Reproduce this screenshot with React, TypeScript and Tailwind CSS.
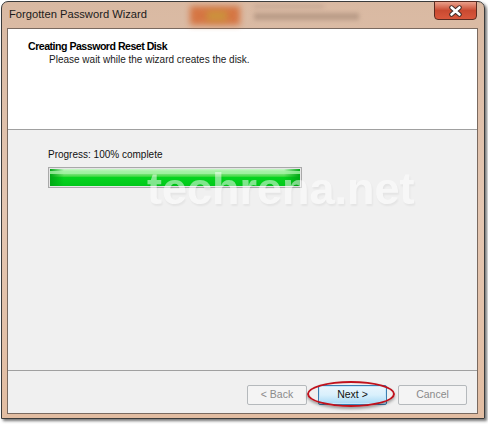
const font = { fontFamily: '"Liberation Sans", Arial, sans-serif' };

const CloseGlyph = () => (
  <svg width="15" height="12" viewBox="0 0 15 12">
    <path d="M3.5 2.5 L11.5 9.5 M11.5 2.5 L3.5 9.5" stroke="#3b2a26" strokeWidth="4.4" strokeLinecap="round" />
    <path d="M3.5 2.5 L11.5 9.5 M11.5 2.5 L3.5 9.5" stroke="#ffffff" strokeWidth="2.6" strokeLinecap="round" />
  </svg>
);

const WizButton = ({ label, primary, w }: { label: string; primary?: boolean; w: string }) => (
  <div
    className={
      w +
      " h-[20px] flex items-center justify-center rounded-[2px] border text-[10.5px] " +
      (primary
        ? "border-[#3c7fb1] bg-gradient-to-b from-[#eaf6fd] via-[#d9f0fc] to-[#a7d9f5] text-[#111] shadow-[inset_0_0_0_1px_#c6e8fb]"
        : "border-[#b5b9bc] bg-[#f4f4f4] text-[#8a8a8a]")
    }
  >
    {label}
  </div>
);

export default function App() {
  return (
    <div className="w-[488px] h-[426px] bg-white overflow-hidden" style={font}>
      <div className="ml-[1px] mt-[1px] w-[484px] h-[418px] rounded-t-[7px] border border-[#3b3b3b] bg-gradient-to-b from-[#d9b9a2] via-[#e4c6b1] to-[#e2bda2] shadow-[2px_2px_3px_rgba(0,0,0,0.55)] flex flex-col">
        {/* title bar */}
        <div className="relative h-[26px] flex items-start shrink-0">
          <div className="pl-[7px] pt-[7px] text-[11.2px] text-[#1b1b1b] leading-none">Forgotten Password Wizard</div>
          <div className="absolute left-[188px] top-[4px] w-[50px] h-[19px] bg-[#d4652c] blur-[3px] opacity-80" />
          <div className="absolute left-[205px] top-[9px] w-[20px] h-[10px] bg-[#c8a03a] blur-[3px] opacity-70" />
          <div className="absolute left-[252px] top-[3px] w-[70px] h-[3px] bg-[#b89a88] blur-[2px] opacity-60" />
          <div className="absolute left-[252px] top-[11px] w-[105px] h-[7px] bg-[#a58976] blur-[2px] opacity-60" />
          <div className="absolute right-[7px] top-[-1px] w-[43px] h-[19px] rounded-b-[4px] border border-[#5b2c22] bg-gradient-to-b from-[#e9a08b] via-[#c94a31] to-[#d9573c] flex items-center justify-center">
            <CloseGlyph />
          </div>
        </div>
        {/* client */}
        <div className="ml-[5px] w-[471px] h-[386px] border border-[#7a6a60] bg-[#f0f0f0] flex flex-col">
          <div className="h-[101px] bg-white border-b border-[#a0a0a0] shrink-0">
            <div className="pl-[20px] pt-[10px] text-[10.6px] font-bold tracking-[-0.5px] text-black leading-[14px]">Creating Password Reset Disk</div>
            <div className="pl-[41px] text-[10px] text-[#1a1a1a] leading-[13px]">Please wait while the wizard creates the disk.</div>
          </div>
          <div className="relative flex-1 border-b border-[#a0a0a0]">
            <div className="pl-[40px] pt-[18px] text-[10px] text-[#111] leading-[13px]">Progress: 100% complete</div>
            <div className="ml-[40px] mt-[6px] w-[254px] h-[21px] border border-[#a9a9a9] bg-[#e6e6e6] p-[1px]">
              <div className="relative w-full h-full bg-gradient-to-b from-[#c8f8c8] via-[#06d41e] to-[#00c81a] overflow-hidden">
                <div className="absolute left-0 top-0 h-full w-[14px] bg-gradient-to-r from-[#00a814] to-transparent" />
                <div className="absolute right-0 top-0 h-full w-[16px] bg-gradient-to-l from-[#00a814] to-transparent" />
                <div className="absolute left-0 top-[2px] w-full h-[3px] bg-[#a6f2a6] opacity-80" />
              </div>
            </div>
            <div className="absolute left-[139px] top-[36px] text-[45px] font-bold text-white opacity-50 leading-none [text-shadow:1px_2px_2px_rgba(0,0,0,0.1)] pointer-events-none">
              techrena.net
            </div>
          </div>
          <div className="relative h-[42px] shrink-0 flex items-start pt-[14px] pl-[239px] gap-[11px]">
            <WizButton label="< Back" w="w-[60px]" />
            <WizButton label="Next >" primary w="w-[69px]" />
            <WizButton label="Cancel" w="w-[69px]" />
            <div className="absolute left-[299px] top-[10px] w-[88px] h-[26px] rounded-[50%] border-2 border-[#c0121c] shadow-[0_2px_3px_rgba(0,0,0,0.35)] pointer-events-none" />
          </div>
        </div>
      </div>
    </div>
  );
}
